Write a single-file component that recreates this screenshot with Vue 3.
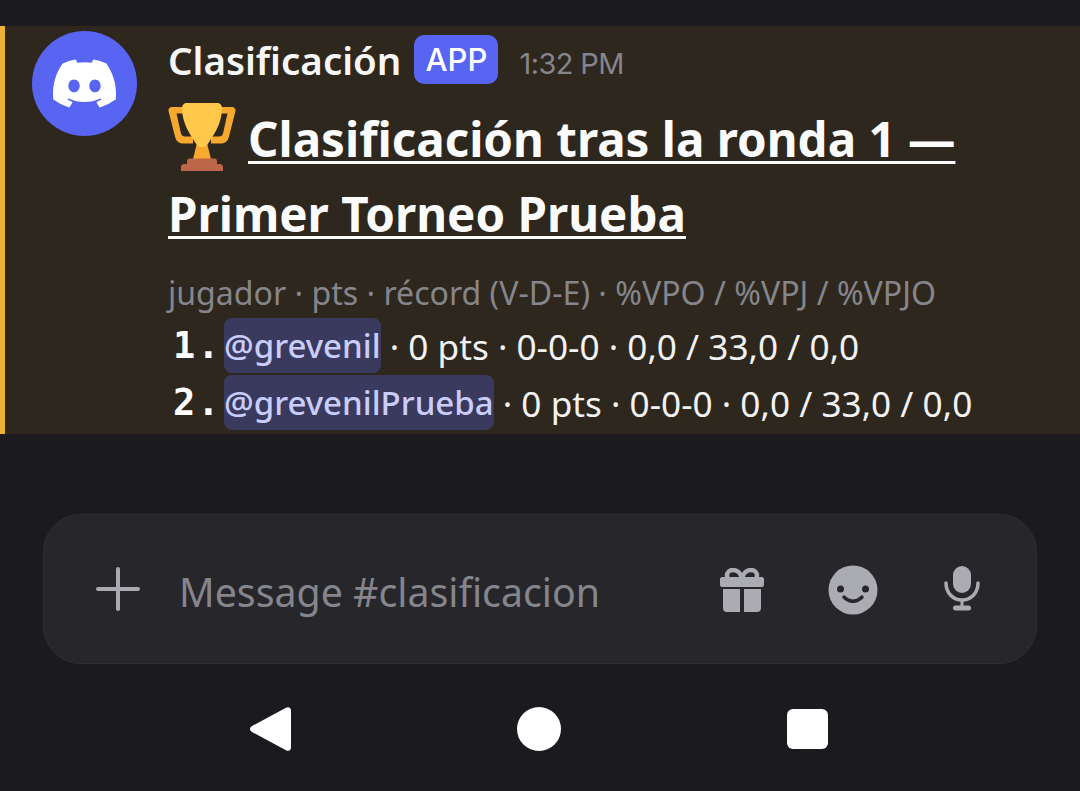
<template>
  <div class="screen">
    <section class="message">
      <div class="avatar">
        <svg viewBox="0 0 24 24" width="63" height="63" fill="#fff">
          <path d="M20.317 4.37a19.791 19.791 0 0 0-4.885-1.515.074.074 0 0 0-.079.037c-.21.375-.444.864-.608 1.25a18.27 18.27 0 0 0-5.487 0 12.64 12.64 0 0 0-.617-1.25.077.077 0 0 0-.079-.037A19.736 19.736 0 0 0 3.677 4.37a.07.07 0 0 0-.032.027C.533 9.046-.32 13.58.099 18.057a.082.082 0 0 0 .031.057 19.9 19.9 0 0 0 5.993 3.03.078.078 0 0 0 .084-.028 14.09 14.09 0 0 0 1.226-1.994.076.076 0 0 0-.041-.106 13.107 13.107 0 0 1-1.872-.892.077.077 0 0 1-.008-.128 10.2 10.2 0 0 0 .372-.292.074.074 0 0 1 .077-.01c3.928 1.793 8.18 1.793 12.062 0a.074.074 0 0 1 .078.01c.12.098.246.198.373.292a.077.077 0 0 1-.006.127 12.299 12.299 0 0 1-1.873.892.077.077 0 0 0-.041.107c.36.698.772 1.362 1.225 1.993a.076.076 0 0 0 .084.028 19.839 19.839 0 0 0 6.002-3.03.077.077 0 0 0 .032-.054c.5-5.177-.838-9.674-3.549-13.66a.061.061 0 0 0-.031-.03zM8.02 15.33c-1.183 0-2.157-1.085-2.157-2.419 0-1.333.956-2.419 2.157-2.419 1.21 0 2.176 1.096 2.157 2.42 0 1.333-.956 2.418-2.157 2.418zm7.975 0c-1.183 0-2.157-1.085-2.157-2.419 0-1.333.955-2.419 2.157-2.419 1.21 0 2.176 1.096 2.157 2.42 0 1.333-.946 2.418-2.157 2.418z" />
        </svg>
      </div>
      <div class="body">
        <div class="head">
          <span class="name">Clasificación</span>
          <span class="badge">APP</span>
          <span class="time">1:32 PM</span>
        </div>
        <h1 class="title">
          <svg class="trophy" viewBox="0 0 68 68" width="68" height="68">
            <path d="M4 4h16v6.500H8.500l4.500 20c.5 2 2 3 4 3h8v7H15c-4 0-7-2.500-8-7L.5 8c-.5-2 1.500-4 3.500-4zM64 4H48v6.500h11.500l-4.500 20c-.5 2-2 3-4 3h-8v7h10c4 0 7-2.500 8-7L67.500 8c.5-2-1.500-4-3.500-4z" fill="#f6a82f" />
            <path d="M29 40h10l5 20H24z" fill="#f6a82f" />
            <path d="M19 0h30c3 0 5 2 5 5 0 15-8 27-15 37-2.500 3-7.500 3-10 0-7-10-15-22-15-37 0-3 2-5 5-5z" fill="#ffc84a" />
            <path d="M19 58c0-1.500 1-2.500 2.500-2.500h25c1.500 0 2.500 1 2.500 2.500v3h3c1.500 0 3 1 3 3v4H13v-4c0-2 1.500-3 3-3h3z" fill="#bd664a" />
          </svg>
          <span class="title-text">Clasificación tras la ronda 1 —</span><br />
          <span class="title-text">Primer Torneo Prueba</span>
        </h1>
        <div class="legend">jugador · pts · récord (V-D-E) · %VPO / %VPJ / %VPJO</div>
        <ol class="rows">
          <li v-for="(p, i) in players" :key="p" class="row">
            <span class="num">{{ i + 1 }}.</span>
            <span class="mention">@{{ p }}</span>
            <span class="stats"> · 0 pts · 0-0-0 · 0,0 / 33,0 / 0,0</span>
          </li>
        </ol>
      </div>
    </section>

    <div class="composer-wrap">
      <div class="composer">
        <svg class="plus" viewBox="0 0 44 44" width="44" height="44">
          <path d="M22 2v40M2 22h40" stroke="#a9a9b0" stroke-width="4" stroke-linecap="round" />
        </svg>
        <span class="placeholder">Message #clasificacion</span>
        <svg class="gift" viewBox="0 0 46 46" width="46" height="46" fill="#ababb2">
          <path d="M4 21h17v23H8c-2.500 0-4-1.500-4-4zM25 21h17v19c0 2.500-1.500 4-4 4H25z" />
          <path d="M3 9h40c1 0 2 1 2 2v6c0 1-1 2-2 2H3c-1 0-2-1-2-2v-6c0-1 1-2 2-2z" />
          <path d="M23 11c-1-6-5-9-9-9-3.500 0-6 2.500-6 5.500S10 13 13 13M23 11c1-6 5-9 9-9 3.500 0 6 2.500 6 5.500S36 13 33 13" fill="none" stroke="#ababb2" stroke-width="4.500" />
        </svg>
        <svg class="smile" viewBox="0 0 50 50" width="50" height="50">
          <circle cx="25" cy="25" r="24.500" fill="#ababb2" />
          <circle cx="12.500" cy="24" r="3.500" fill="#26262b" />
          <circle cx="37.500" cy="24" r="3.500" fill="#26262b" />
          <path d="M16 32c5 5.500 13 5.500 18 0" fill="none" stroke="#26262b" stroke-width="3.500" stroke-linecap="round" />
        </svg>
        <svg class="mic" viewBox="0 0 36 46" width="36" height="46" fill="#ababb2">
          <rect x="9" y="0" width="18" height="27" rx="9" />
          <path d="M2 17c0 10 7 17 16 17s16-7 16-17" fill="none" stroke="#ababb2" stroke-width="3.500" stroke-linecap="round" />
          <rect x="16.500" y="33" width="3" height="9" />
          <rect x="9" y="39.500" width="18" height="5" rx="2.500" />
        </svg>
      </div>
    </div>

    <nav class="nav">
      <svg viewBox="0 0 41 44" width="41" height="44" fill="#fff">
        <path d="M36 .8c2.500-1.500 5 0 5 2.700v37c0 2.700-2.500 4.200-5 2.700L2 25c-2.600-1.500-2.600-4.500 0-6z" />
      </svg>
      <span class="home"></span>
      <span class="recent"></span>
    </nav>
  </div>
</template>

<script setup>
const players = ['grevenil', 'grevenilPrueba']
</script>

<style>
html, body { background: #1a1a1f; }
</style>

<style scoped>
.screen {
  width: 1080px;
  height: 791px;
  background: #1a1a1f;
  color: #fff;
  display: flex;
  flex-direction: column;
  overflow: hidden;
  font-family: "Noto Sans", "Open Sans", sans-serif;
}
.message {
  margin-top: 26px;
  height: 408px;
  box-sizing: border-box;
  background: #2d271e;
  border-left: 5px solid #f0b232;
  padding: 5px 0 0 27px;
  display: flex;
  gap: 31px;
  overflow: hidden;
}
.avatar {
  width: 105px;
  height: 105px;
  flex: none;
  border-radius: 50%;
  background: #5865f2;
  display: flex;
  align-items: center;
  justify-content: center;
}
.body { min-width: 0; flex: 1; }
.head {
  display: flex;
  align-items: center;
  height: 58px;
}
.name {
  font-size: 38.500px;
  font-weight: 600;
  line-height: 58px;
  color: #f6f6f7;
}
.badge {
  margin: 0 0 2px 13px;
  width: 84px;
  height: 49px;
  border-radius: 10px;
  background: #5865f2;
  font-family: Inter, sans-serif;
  font-size: 31px;
  font-weight: 500;
  display: flex;
  align-items: center;
  justify-content: center;
}
.time {
  margin-left: 21px;
  margin-top: 6px;
  font-family: Inter, sans-serif;
  font-size: 29px;
  letter-spacing: -0.6px;
  color: #85858c;
}
.title {
  margin: 12px 0 0;
  font-size: 47.500px;
  font-weight: 700;
  line-height: 75px;
  color: #fbfbfb;
}
.trophy {
  vertical-align: -14px;
  margin-right: 12px;
}
.title-text {
  text-decoration: underline;
  text-decoration-thickness: 3px;
  text-underline-offset: 4px;
}
.legend {
  margin-top: 20px;
  font-size: 32.100px;
  line-height: 44px;
  color: #85858c;
}
.rows {
  list-style: none;
  margin: 2px 0 0;
  padding: 0;
}
.row {
  display: flex;
  align-items: center;
  white-space: pre;
  height: 57px;
}
.num {
  width: 56px;
  box-sizing: border-box;
  padding-left: 5px;
  font-family: "DejaVu Sans Mono", monospace;
  font-weight: 700;
  font-size: 37px;
  letter-spacing: 2px;
}
.mention {
  background: #3a3a5e;
  color: #c9cdfb;
  border-radius: 8px;
  font-size: 33px;
  line-height: 55px;
  font-weight: 500;
}
.stats {
  font-size: 35.200px;
  color: #f2f2f3;
}
.composer-wrap {
  padding: 80px 43px 0;
}
.composer {
  height: 150px;
  box-sizing: border-box;
  background: #26262b;
  border: 1px solid #2e2e33;
  border-radius: 38px;
  display: flex;
  align-items: center;
  padding: 0 56px 0 52px;
}
.placeholder {
  margin: 6px 0 0 39px;
  flex: 1;
  font-size: 39.300px;
  color: #85858c;
}
.gift { margin-top: 4px; }
.smile { margin: 2px 0 0 63px; }
.mic { margin-left: 66px; }
.nav {
  margin-top: 43px;
  display: flex;
  align-items: center;
  padding-left: 250px;
}
.home {
  width: 44px;
  height: 44px;
  border-radius: 50%;
  background: #fff;
  margin-left: 226px;
}
.recent {
  width: 41px;
  height: 40px;
  border-radius: 6px;
  background: #fff;
  margin-left: 226px;
}
</style>
